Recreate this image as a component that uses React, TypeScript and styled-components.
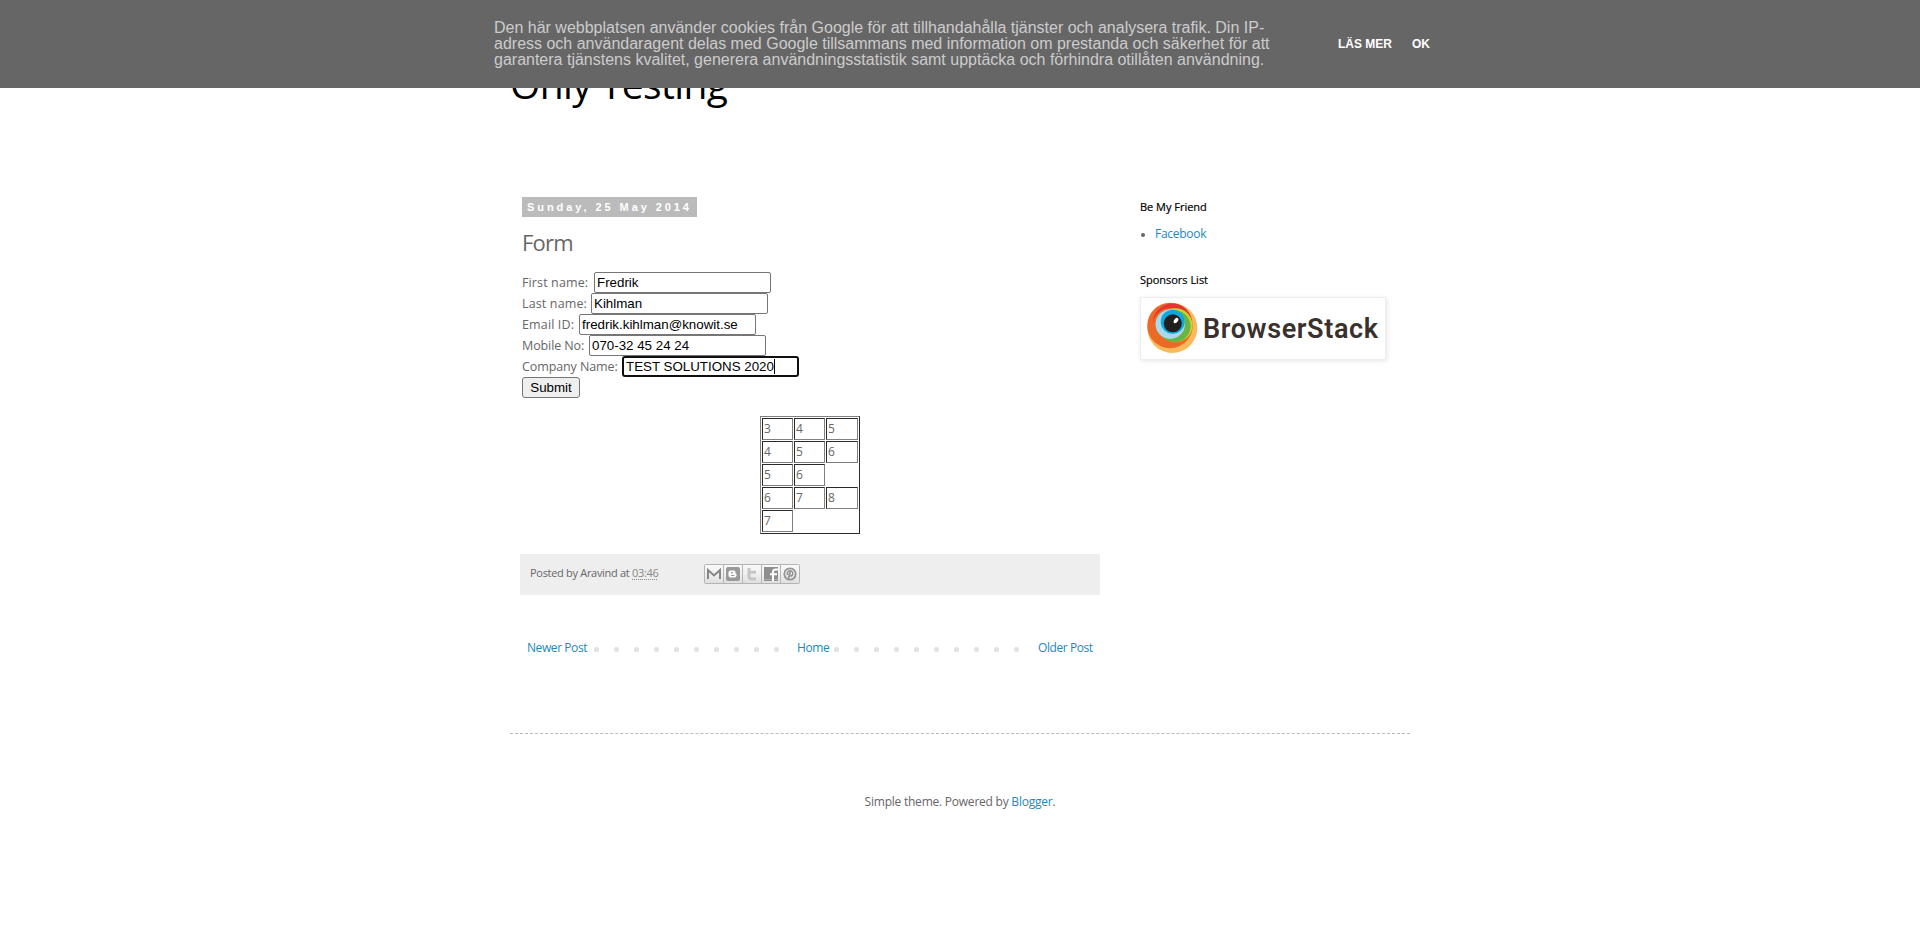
import React from "react";
import styled, { createGlobalStyle } from "styled-components";

const GlobalStyle = createGlobalStyle`
  * { box-sizing: border-box; }
  body { margin: 0; background: #fff; color: #666; font-family: "Open Sans", "Noto Sans", sans-serif; font-size: 12px; line-height: 20px; }
`;
const sans = `"Liberation Sans", Arial, sans-serif`;

const CookieBar = styled.div`
  position: fixed; top: 0; left: 0; right: 0; z-index: 2; height: 88px;
  background: #666; display: flex; padding: 20px 0 0 494px;
  font-family: ${sans};
`;
const CookieText = styled.div`
  width: 800px; font-size: 16px; line-height: 16px; color: #ccc; white-space: nowrap;
`;
const CookieLine = styled.div``;
const CookieButtons = styled.div`
  display: flex; gap: 20px; margin-left: 44px; height: 48px; align-items: center;
  color: #fff; font-size: 12px; font-weight: bold; white-space: nowrap;
`;
const Page = styled.div`width: 900px; margin: 0 auto; height: 925px; padding-top: 60px; overflow: hidden;`;
const Title = styled.h1`
  margin: 0; height: 48px; line-height: 48px; font-size: 39px; font-weight: 400; color: #000; white-space: nowrap;
  letter-spacing: -0.6px;
`;
const Columns = styled.div`display: flex; height: 626px; padding: 89px 0 0 10px; border-bottom: 1px dashed #bbb;`;
const Main = styled.main`width: 580px;`;
const DateBadge = styled.div`
  margin-left: 2px; width: 175px; height: 20px; background: #bbb; color: #fff; padding-left: 5px;
  font: bold 11px/20px ${sans}; letter-spacing: 2.93px; white-space: nowrap;
`;
const PostTitle = styled.h3`margin: 11px 0 16px 2px; height: 28px; line-height: 28px; font-size: 22px; font-weight: 400; letter-spacing: -0.8px;`;
const Row = styled.div`display: flex; height: 21px; margin-left: 2px; line-height: 21px;`;
const Label = styled.label<{ $w: number; $ls: number }>`
  width: ${p => p.$w}px; letter-spacing: ${p => p.$ls}px; white-space: nowrap; font-size: 12.5px;
`;
const FieldBox = styled.div`position: relative; width: 177px; height: 21px;`;
const Field = styled.input<{ $active?: boolean }>`
  display: block; width: 177px; height: 21px; padding: ${p => (p.$active ? "0 2px" : "1px 2px")}; margin: 0; outline: 0; color: #000; background: #fff;
  border: ${p => (p.$active ? "2px solid #101010" : "1px solid #767676")};
  border-radius: ${p => (p.$active ? 3 : 2)}px; font: 13.333px ${sans};
`;
const Caret = styled.span`position: absolute; left: 152px; top: 3px; width: 1px; height: 15px; background: #000;`;
const Submit = styled.button`
  width: 58px; height: 21px; padding: 0; color: #000; background: #efefef; border: 1px solid #767676;
  border-radius: 3px; font: 13.333px ${sans};
`;
const Grid = styled.div`
  display: grid; grid-template-columns: 31px 31px 32px; grid-auto-rows: 22px; gap: 1px; padding: 1px;
  width: 100px; margin: 18px 0 0 240px; border: 1px solid; border-color: #808080 #2b2b2b #2b2b2b #808080;
`;
const Cell = styled.div<{ $empty: boolean }>`
  border: 1px solid; border-color: #2b2b2b #808080 #808080 #2b2b2b; padding-left: 1px; line-height: 20px; font-size: 12px;
  visibility: ${p => (p.$empty ? "hidden" : "visible")};
`;
const PostFooter = styled.div`
  margin-top: 20px; height: 41px; background: #eee; padding: 9px 0 0 10px; display: flex; font-size: 11px;
  svg { margin-top: 1px; }
`;
const Byline = styled.div`width: 174px; white-space: nowrap; letter-spacing: -0.3px;`;
const Time = styled.span`color: #888; text-decoration: underline dotted; text-underline-offset: 2px;`;
const Pager = styled.nav`
  margin-top: 43px; height: 20px; padding-left: 7px; display: flex; justify-content: space-between; color: #2288bb;
  background: radial-gradient(circle at 16.5px 11.5px, #e2e2e2 2.2px, transparent 2.9px) 0 0 / 20px 20px repeat-x;
`;
const PagerLink = styled.a<{ $w: number; $pad?: number }>`
  width: ${p => p.$w}px; background: #fff; letter-spacing: -0.42px; white-space: nowrap;
  padding-left: ${p => p.$pad ?? 0}px;
`;
const Side = styled.aside`padding-left: 40px;`;
const SideTitle = styled.h2`
  margin: 0; height: 20px; font-size: 11px; line-height: 20px; font-weight: 400; color: #000;
  -webkit-text-stroke: 0.2px #000; letter-spacing: -0.02px; white-space: nowrap;
`;
const List = styled.ul`list-style: none; margin: 7px 0 26px; padding: 0;`;
const Item = styled.li`
  display: flex; align-items: center; gap: 10px; padding-left: 1px; color: #2288bb; letter-spacing: -0.28px;
  &::before { content: ""; width: 4px; height: 4px; border-radius: 50%; background: #666; margin-top: 2px; }
`;
const Sponsor = styled.div`
  width: 246px; height: 63px; margin-top: 7px; border: 1px solid #eee; background: #fff; box-shadow: 1px 1px 5px rgba(0,0,0,.1);
  svg { display: block; }
`;
const Credit = styled.footer`margin-top: 58px; text-align: center; white-space: nowrap; letter-spacing: -0.23px; a { color: #2288bb; }`;

const fields = [
  { label: "First name:", value: "Fredrik", w: 72, ls: 0.12 },
  { label: "Last name:", value: "Kihlman", w: 69, ls: 0.14 },
  { label: "Email ID:", value: "fredrik.kihlman@knowit.se", w: 57, ls: 0.14 },
  { label: "Mobile No:", value: "070-32 45 24 24", w: 67, ls: -0.1 },
  { label: "Company Name:", value: "TEST SOLUTIONS 2020", w: 100, ls: -0.1, active: true },
];
const cells = ["3", "4", "5", "4", "5", "6", "5", "6", "", "6", "7", "8", "7", "", ""];

const ShareIcons = () => (
  <svg width="96" height="20" viewBox="0 0 96 20">
    <defs>
      <linearGradient id="btn" x1="0" y1="0" x2="0" y2="1">
        <stop offset="0" stopColor="#fafafa" /><stop offset=".5" stopColor="#f0f0f0" /><stop offset="1" stopColor="#dedede" />
      </linearGradient>
    </defs>
    <rect x=".5" y=".5" width="95" height="19" rx="1" fill="url(#btn)" stroke="#b4b4b4" />
    <path d="M19.5 1v18M38.5 1v18M57.5 1v18M76.5 1v18" stroke="#b4b4b4" />
    <path d="M4 15V6l6 5.5L16 6v9" fill="none" stroke="#868686" strokeWidth="2" />
    <rect x="22" y="3" width="14" height="14" rx="2" fill="#999" />
    <path d="M26.5 6.5h3a1.8 1.8 0 0 1 1.8 2.2c0 .8 1.2.4 1.2 1.6v1.2a2 2 0 0 1-2 2h-4a2 2 0 0 1-2-2v-3a2 2 0 0 1 2-2z" fill="#fff" />
    <path d="M27 8.7h2M27 11.5h3.4" stroke="#999" strokeWidth="1.2" />
    <path d="M45 4v8q0 3 3 3h4M45 8.2h7" fill="none" stroke="#c6c6c6" strokeWidth="3" />
    <rect x="60" y="3" width="14" height="14" fill="#8e8e8e" />
    <path d="M60 15.5h14" stroke="#aaa" />
    <path d="M69 17V8q0-2.5 2.5-2.5H74M66 10.2h7" fill="none" stroke="#fff" strokeWidth="2" />
    <circle cx="86" cy="10" r="5.7" fill="none" stroke="#949494" strokeWidth="1.8" />
    <path d="M84 16l2.2-8M83.5 11c-1.5-5 5.5-5.5 5.3-1.5-.2 3-3 3-3.3 1.5" fill="none" stroke="#949494" strokeWidth="1.7" />
  </svg>
);

const BrowserStack = () => (
  <svg width="244" height="61" viewBox="1 1 244 61">
    <circle cx="32.3" cy="31" r="25" fill="#fab95a" />
    <circle cx="30" cy="28.5" r="22.7" fill="#ea6a26" />
    <circle cx="32.5" cy="26" r="19.5" fill="#e63338" />
    <circle cx="30.5" cy="29" r="18" fill="#ea6a26" />
    <circle cx="35.5" cy="28.3" r="17" fill="#c2d52f" />
    <circle cx="34.5" cy="29.3" r="16" fill="#69b445" />
    <circle cx="30.2" cy="27.2" r="14.7" fill="#a9d9ea" />
    <circle cx="32.7" cy="24.8" r="12" fill="#0ca9df" />
    <circle cx="32.8" cy="26.3" r="9" fill="#221f1f" />
    <ellipse cx="36" cy="23.5" rx="1.9" ry="3" fill="#fff" transform="rotate(35 36 23.5)" />
    <text x="63" y="41" fontFamily="Roboto, sans-serif" fontWeight="600" fontSize="27" fill="#3a312c" textLength="175">BrowserStack</text>
  </svg>
);

export default function App() {
  return (
    <>
      <GlobalStyle />
      <CookieBar>
        <CookieText>
          <CookieLine>Den här webbplatsen använder cookies från Google för att tillhandahålla tjänster och analysera trafik. Din IP-</CookieLine>
          <CookieLine>adress och användaragent delas med Google tillsammans med information om prestanda och säkerhet för att</CookieLine>
          <CookieLine>garantera tjänstens kvalitet, generera användningsstatistik samt upptäcka och förhindra otillåten användning.</CookieLine>
        </CookieText>
        <CookieButtons><span>LÄS MER</span><span>OK</span></CookieButtons>
      </CookieBar>
      <Page>
        <Title>Only Testing</Title>
        <Columns>
          <Main>
            <DateBadge>Sunday, 25 May 2014</DateBadge>
            <PostTitle>Form</PostTitle>
            {fields.map(f => (
              <Row key={f.label}>
                <Label $w={f.w} $ls={f.ls}>{f.label}</Label>
                <FieldBox>
                  <Field defaultValue={f.value} $active={f.active} />
                  {f.active && <Caret />}
                </FieldBox>
              </Row>
            ))}
            <Row><Submit>Submit</Submit></Row>
            <Grid>{cells.map((c, i) => <Cell key={i} $empty={!c}>{c}</Cell>)}</Grid>
            <PostFooter>
              <Byline>Posted by Aravind at <Time>03:46</Time></Byline>
              <ShareIcons />
            </PostFooter>
            <Pager>
              <PagerLink $w={63}>Newer Post</PagerLink>
              <PagerLink $w={44} $pad={9}>Home</PagerLink>
              <PagerLink $w={70} $pad={8}>Older Post</PagerLink>
            </Pager>
          </Main>
          <Side>
            <SideTitle>Be My Friend</SideTitle>
            <List><Item>Facebook</Item></List>
            <SideTitle>Sponsors List</SideTitle>
            <Sponsor><BrowserStack /></Sponsor>
          </Side>
        </Columns>
        <Credit>Simple theme. Powered by <a>Blogger</a>.</Credit>
      </Page>
    </>
  );
}
